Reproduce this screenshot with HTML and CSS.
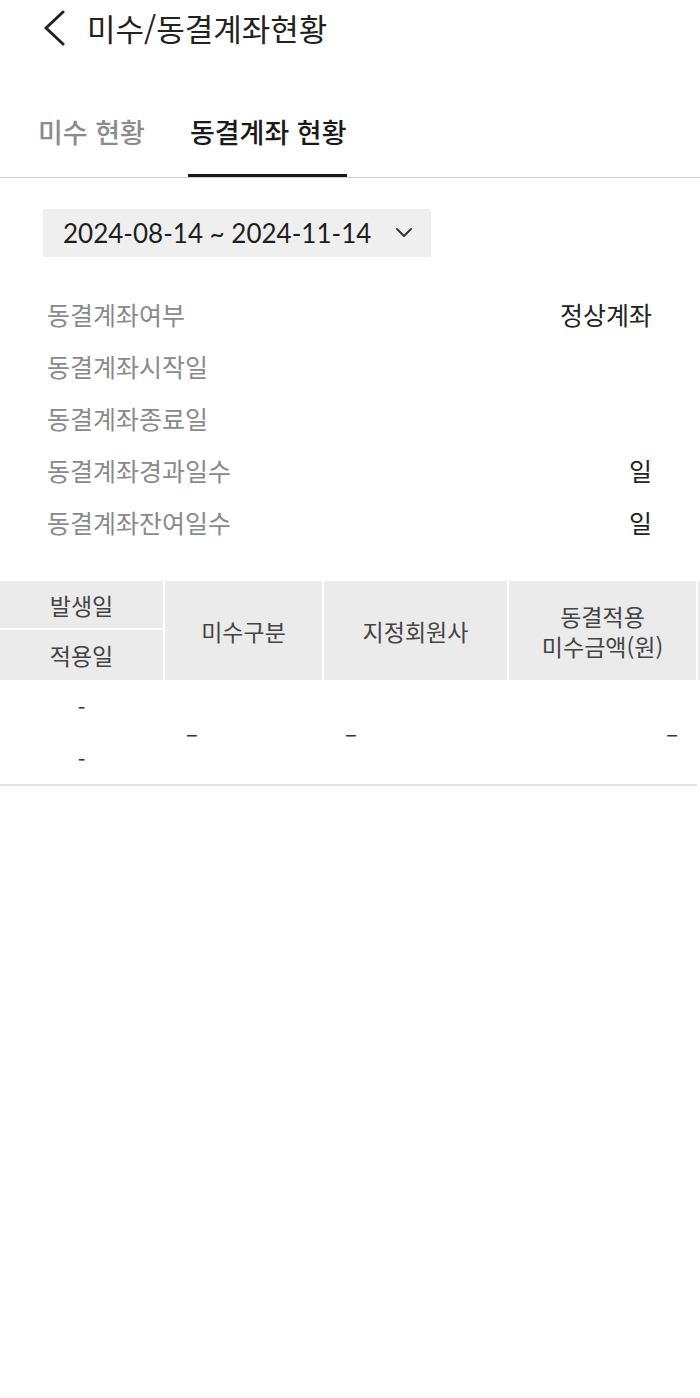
FILE: index.html
```html
<!DOCTYPE html>
<html lang="ko">
<head>
<meta charset="utf-8">
<title>미수/동결계좌현황</title>
<link rel="stylesheet" href="styles.css">
</head>
<body>
<header class="topbar">
  <svg class="back" width="24" height="36" viewBox="0 0 24 36" aria-hidden="true">
    <path d="M21 2 L4 18 L21 34" fill="none" stroke="#222" stroke-width="3" stroke-linecap="round" stroke-linejoin="round"/>
  </svg>
  <h1 class="title">미수/동결계좌현황</h1>
</header>

<nav class="tabs">
  <div class="tab">미수 현황</div>
  <div class="tab active">동결계좌 현황</div>
</nav>

<div class="period">
  <span class="period-text">2024-08-14 ~ 2024-11-14</span>
  <svg class="chev" width="18" height="12" viewBox="0 0 18 12" aria-hidden="true">
    <path d="M2 2 L9 9 L16 2" fill="none" stroke="#333" stroke-width="2" stroke-linecap="round" stroke-linejoin="round"/>
  </svg>
</div>

<dl class="info">
  <div class="info-row"><dt>동결계좌여부</dt><dd>정상계좌</dd></div>
  <div class="info-row"><dt>동결계좌시작일</dt><dd></dd></div>
  <div class="info-row"><dt>동결계좌종료일</dt><dd></dd></div>
  <div class="info-row"><dt>동결계좌경과일수</dt><dd>일</dd></div>
  <div class="info-row"><dt>동결계좌잔여일수</dt><dd>일</dd></div>
</dl>

<div class="table-wrap">
  <div class="grid thead">
    <div class="th c1">발생일</div>
    <div class="th c1b">적용일</div>
    <div class="th span">미수구분</div>
    <div class="th span">지정회원사</div>
    <div class="th span"><span class="two">동결적용<br>미수금액(원)</span></div>
    <div class="th span"></div>
  </div>
  <div class="grid tbody">
    <div class="td first"><span>-</span><span>-</span></div>
    <div class="td left">–</div>
    <div class="td left">–</div>
    <div class="td right">–</div>
  </div>
</div>
</body>
</html>
```

FILE: styles.css
```css
* { box-sizing: border-box; }
html, body { margin: 0; padding: 0; background: #fff; }
body {
  width: 700px;
  min-height: 1398px;
  font-family: "Noto Sans CJK KR", "Noto Sans", sans-serif;
  color: #222;
  overflow: hidden;
}

.topbar {
  height: 56px;
  display: flex;
  align-items: center;
  padding-left: 42px;
}
.back { display: block; flex: none; }
.title {
  margin: 0 0 0 21px;
  font-size: 31px;
  font-weight: 400;
  line-height: 40px;
  color: #222;
}

.tabs {
  display: flex;
  align-items: flex-end;
  gap: 43px;
  padding: 57px 0 0 38px;
  border-bottom: 1px solid #cfcfcf;
}
.tab {
  font-size: 27px;
  line-height: 38px;
  padding-bottom: 23px;
  border-bottom: 3px solid transparent;
  color: #8c8c8c;
  font-weight: 500;
}
.tab.active {
  color: #1a1a1a;
  border-bottom-color: #1a1a1a;
  padding-left: 2px;
}

.period {
  margin: 31px 0 0 43px;
  width: 388px;
  height: 48px;
  background: #efefef;
  border-radius: 3px;
  display: flex;
  align-items: center;
  justify-content: space-between;
  padding: 0 18px 0 20px;
}
.period-text {
  font-family: "Lato", "Liberation Sans", sans-serif;
  font-size: 26px;
  color: #1e1e1e;
  line-height: 1;
}
.chev { display: block; }

.info {
  margin: 31px 0 0 0;
  padding: 0 48px 0 47px;
}
.info-row {
  display: flex;
  justify-content: space-between;
  align-items: center;
  height: 52px;
  font-size: 25px;
}
.info-row dt { color: #8a8a8a; }
.info-row dd { margin: 0; color: #222; }

.table-wrap {
  margin-top: 33px;
  overflow: hidden;
  width: 700px;
}
.grid {
  display: grid;
  grid-template-columns: 163px 157px 183px 187px 180px;
  column-gap: 2px;
  width: 880px;
}
.thead {
  grid-template-rows: 47px 50px;
  row-gap: 2px;
}
.th {
  background: #ebebeb;
  color: #444;
  font-size: 23px;
  line-height: 30px;
  display: flex;
  align-items: center;
  justify-content: center;
  text-align: center;
}
.th .two { display: block; line-height: 30px; }
.th.c1 { grid-column: 1; grid-row: 1; }
.th.c1b { grid-column: 1; grid-row: 2; }
.th.span { grid-row: 1 / span 2; }

.tbody {
  height: 106px;
  border-bottom: 2px solid #e3e3e3;
  width: 697px;
  grid-template-columns: 163px 157px 183px 187px;
}
.td {
  font-size: 22px;
  color: #333;
  display: flex;
  align-items: center;
}
.td.first {
  flex-direction: column;
  justify-content: center;
  align-items: center;
  gap: 22px;
  line-height: 30px;
}
.td.left { padding-left: 21px; }
.td.right { justify-content: flex-end; padding-right: 18px; }
```
